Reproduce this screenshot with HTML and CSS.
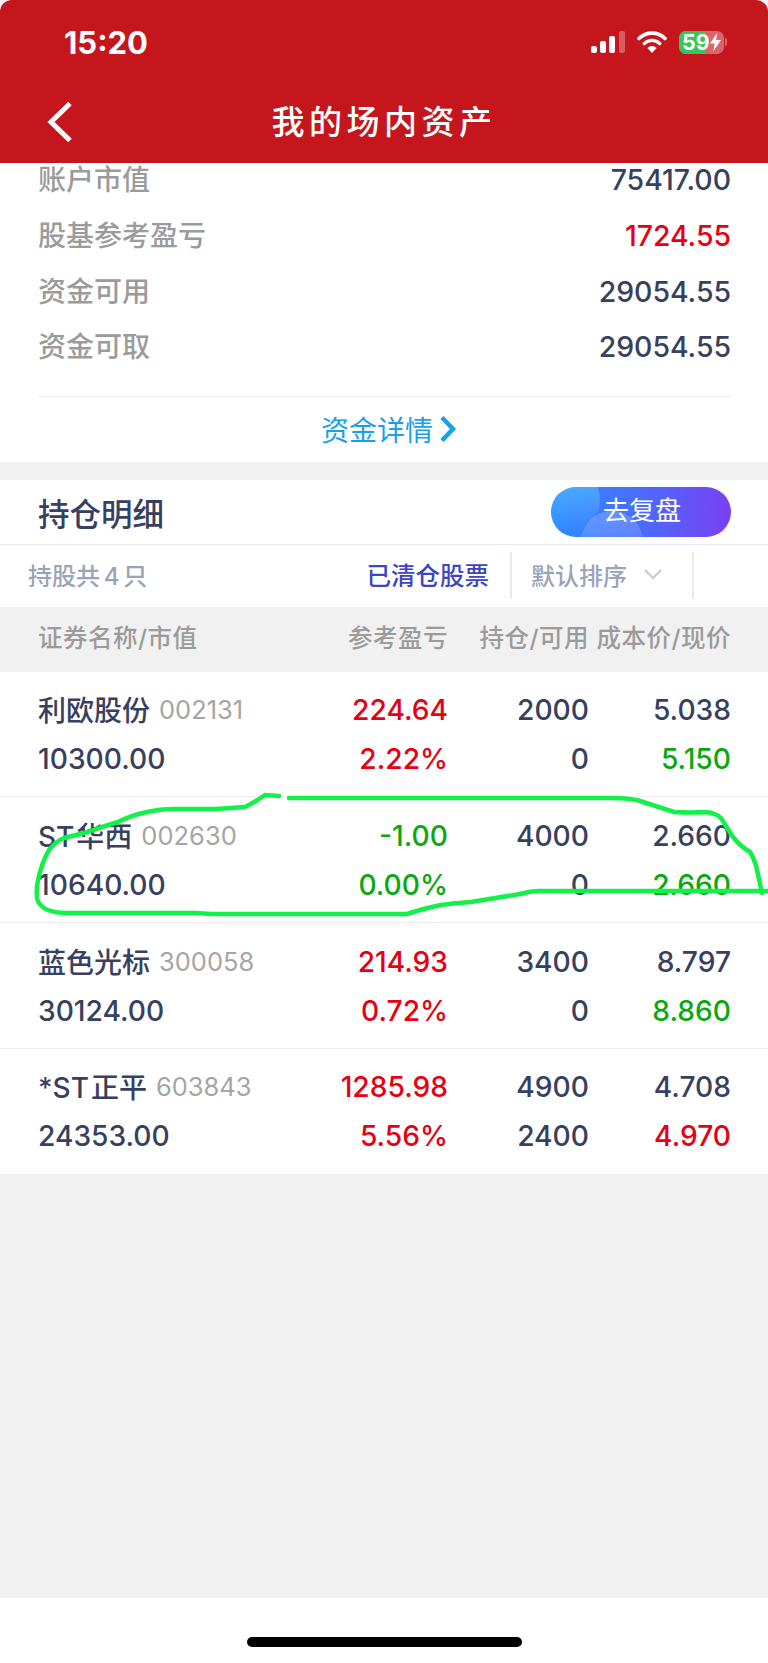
FILE: index.html
```html
<!DOCTYPE html>
<html lang="zh-CN">
<head>
  <meta charset="UTF-8" />
  <meta name="viewport" content="width=device-width, initial-scale=1.0"/>
  <title>我的场内资产</title>
  <link rel="stylesheet" href="styles.css">
</head>
<body>
<div class="page">

  <header class="top">
    <div class="status">
      <span class="time">15:20</span>
      <div class="status-icons">
        <svg class="signal" width="34" height="22" viewBox="0 0 34 22">
          <rect x="0" y="15" width="6" height="7" rx="2" fill="#fff"/>
          <rect x="9" y="10" width="6" height="12" rx="2" fill="#fff"/>
          <rect x="18" y="5" width="6" height="17" rx="2" fill="#fff"/>
          <rect x="28" y="0" width="6" height="22" rx="2" fill="#fff" fill-opacity=".3"/>
        </svg>
        <svg class="wifi" width="30" height="22" viewBox="0 0 30 22">
          <path d="M2 7.5a18.5 18.5 0 0 1 26 0" fill="none" stroke="#fff" stroke-width="3.6" stroke-linecap="round"/>
          <path d="M7.2 12.6a11 11 0 0 1 15.6 0" fill="none" stroke="#fff" stroke-width="3.4" stroke-linecap="round"/>
          <path d="M15 22l-4.6-5a6.4 6.4 0 0 1 9.2 0z" fill="#fff"/>
        </svg>
        <div class="battery">
          <div class="battery-fill"></div>
          <span class="battery-num">59</span>
          <svg class="bolt" width="11" height="18" viewBox="0 0 11 18"><path d="M7 0L0 10.500h4.500L3.500 18 11 7H6.200z" fill="#fff"/></svg>
        </div>
        <div class="battery-nub"></div>
      </div>
    </div>
    <div class="nav">
      <svg class="back" width="26" height="42" viewBox="0 0 26 42"><path d="M23 2.500L4 21l19 18.500" fill="none" stroke="#fff" stroke-width="5"/></svg>
      <h1>我的场内资产</h1>
    </div>
  </header>

  <section class="summary">
    <div class="sum-row"><span>账户市值</span><b>75417.00</b></div>
    <div class="sum-row"><span>股基参考盈亏</span><b class="red">1724.55</b></div>
    <div class="sum-row"><span>资金可用</span><b>29054.55</b></div>
    <div class="sum-row"><span>资金可取</span><b>29054.55</b></div>
    <div class="detail-link">
      资金详情
      <svg width="18" height="28" viewBox="0 0 18 28"><path d="M3 2.500L14 14 3 25.500" fill="none" stroke="#1a9fe8" stroke-width="4.500"/></svg>
    </div>
  </section>

  <section class="holdings">
    <div class="hold-title">
      <h2>持仓明细</h2>
      <div class="review-btn"><span>去复盘</span></div>
    </div>
    <div class="hold-bar">
      <span class="count">持股共 4 只</span>
      <span class="cleared">已清仓股票</span>
      <div class="sort">
        默认排序
        <svg width="18" height="11" viewBox="0 0 18 11"><path d="M1 1l8 8 8-8" fill="none" stroke="#c4c8d2" stroke-width="2"/></svg>
      </div>
    </div>
    <div class="stock-head">
      <span>证券名称/市值</span>
      <span>参考盈亏</span>
      <span>持仓/可用</span>
      <span>成本价/现价</span>
    </div>

    <div class="stock">
      <div class="name">利欧股份<small>002131</small></div>
      <div class="red">224.64</div>
      <div>2000</div>
      <div>5.038</div>
      <div>10300.00</div>
      <div class="red">2.22%</div>
      <div>0</div>
      <div class="green">5.150</div>
    </div>
    <div class="stock">
      <div class="name">ST 华西<small>002630</small></div>
      <div class="green">-1.00</div>
      <div>4000</div>
      <div>2.660</div>
      <div>10640.00</div>
      <div class="green">0.00%</div>
      <div>0</div>
      <div class="green">2.660</div>
    </div>
    <div class="stock">
      <div class="name">蓝色光标<small>300058</small></div>
      <div class="red">214.93</div>
      <div>3400</div>
      <div>8.797</div>
      <div>30124.00</div>
      <div class="red">0.72%</div>
      <div>0</div>
      <div class="green">8.860</div>
    </div>
    <div class="stock">
      <div class="name">*ST 正平<small>603843</small></div>
      <div class="red">1285.98</div>
      <div>4900</div>
      <div>4.708</div>
      <div>24353.00</div>
      <div class="red">5.56%</div>
      <div>2400</div>
      <div class="red">4.970</div>
    </div>
  </section>

  <div class="filler"></div>
  <footer class="home"><div class="home-bar"></div></footer>

  <!-- hand drawn circle on top of the screenshot -->
  <svg class="scribble" width="768" height="1663" viewBox="0 0 768 1663">
    <path d="M289 798L613 798Q625 798 637 800L674 812Q690 813 706 812Q716 813 721 818Q727 828 733 837Q740 846 750 852Q755 860 757 870L762 893"/>
    <path d="M768 891L539 891Q530 891 520 894L471 902Q455 903 441 905Q425 908 407 914L211 914L196 913L64 913Q50 912 44 908Q38 904 37 898Q36 890 38 880Q42 862 49 850Q56 841 64 838Q76 835 88 832Q104 826 118 822Q132 815 147 812Q160 809 172 809L216 809L245 807Q255 802 265 795L279 796"/>
  </svg>
</div>
</body>
</html>
```

FILE: styles.css
```css
* { box-sizing: border-box; }

body {
  margin: 0;
  background: #fff;
  color: #384060;
  font-family: Inter, "Noto Sans CJK SC", sans-serif;
}

h1, h2 { margin: 0; font-weight: 500; }

.red { color: #e60012; }
.green { color: #0aa80f; }

.page {
  position: relative;
  display: flex;
  flex-direction: column;
  width: 768px;
  height: 1663px;
  overflow: hidden;
  background: #f1f1f1;
}

/* red top area */
.top {
  position: relative;
  z-index: 2;
  height: 163px;
  background: #c4161c;
  border-radius: 12px 12px 0 0;
  color: #fff;
}

.status {
  display: flex;
  justify-content: space-between;
  align-items: center;
  height: 84px;
  padding: 0 41px 0 64px;
}

.time {
  font-size: 31px;
  font-weight: 700;
}

.status-icons {
  display: flex;
  align-items: center;
}

.signal { margin-right: 12px; }
.wifi { margin-right: 12px; }

.battery {
  position: relative;
  display: flex;
  align-items: center;
  width: 45px;
  height: 23px;
  padding-left: 3px;
  border-radius: 7px;
  background: rgba(255, 255, 255, .35);
}

.battery-fill {
  position: absolute;
  left: 0;
  top: 0;
  width: 26px;
  height: 100%;
  border-radius: 7px 0 0 7px;
  background: #34c759;
}

.battery-num {
  position: relative;
  font-size: 21.500px;
  font-weight: 700;
  line-height: 23px;
}

.bolt { position: relative; }

.battery-nub {
  width: 2px;
  height: 8px;
  margin-left: 1px;
  border-radius: 0 2px 2px 0;
  background: rgba(255, 255, 255, .35);
}

.nav {
  position: relative;
  display: flex;
  justify-content: center;
  align-items: center;
  height: 76px;
  padding-bottom: 4px;
}

.nav h1 {
  font-size: 33px;
  letter-spacing: 4.500px;
}

.back {
  position: absolute;
  left: 47px;
  top: 17px;
}

/* account numbers */
.summary {
  margin-top: -11px;
  padding: 0 37px 0 38px;
  background: #fff;
}

.sum-row {
  display: flex;
  justify-content: space-between;
  align-items: center;
  height: 55.700px;
  font-size: 28.400px;
}

.sum-row span {
  margin-bottom: 3px;
  color: #9b9b9b;
  font-size: 28px;
  font-weight: 500;
}

.sum-row b { font-weight: 500; }

.detail-link {
  display: flex;
  justify-content: center;
  align-items: center;
  gap: 6px;
  height: 66px;
  margin-top: 21px;
  padding-left: 9px;
  border-top: 1px solid #eee;
  color: #1a9fe8;
  font-size: 28px;
}

/* holdings */
.holdings {
  margin-top: 18px;
  background: #fff;
}

.hold-title {
  display: flex;
  justify-content: space-between;
  align-items: center;
  height: 65px;
  padding: 0 37px 0 38px;
  border-bottom: 1px solid #e6ebf3;
}

.hold-title h2 { font-size: 31.500px; }

.review-btn {
  position: relative;
  width: 180px;
  height: 50px;
  padding-left: 52px;
  overflow: hidden;
  border-radius: 25px;
  background: linear-gradient(90deg, #2f8cff, #4a6cff 50%, #7b3ff2);
  color: #fff;
  font-size: 26px;
  line-height: 48px;
  text-align: left;
}

.review-btn span { position: relative; }

.review-btn::before {
  content: "";
  position: absolute;
  left: -15px;
  top: -20px;
  width: 64px;
  height: 64px;
  border-radius: 50%;
  background: linear-gradient(#55b8ff, rgba(60, 150, 255, 0));
}

.review-btn::after {
  content: "";
  position: absolute;
  left: 30px;
  top: 24px;
  width: 62px;
  height: 62px;
  border-radius: 50%;
  background: linear-gradient(rgba(255, 255, 255, .2), rgba(255, 255, 255, .04));
}

.hold-bar {
  display: flex;
  align-items: center;
  height: 62px;
  padding: 0 0 0 28px;
  font-size: 24px;
}

.count {
  flex: 1;
  padding-bottom: 2px;
  color: #9aa3b8;
  font-weight: 500;
  word-spacing: -2.600px;
}

.cleared {
  margin-right: 21px;
  padding-bottom: 2px;
  color: #3d45c0;
  font-size: 24.500px;
  font-weight: 500;
}

.sort {
  display: flex;
  align-items: center;
  gap: 17px;
  width: 184px;
  height: 47px;
  margin-right: 74px;
  padding: 0 0 2px 19px;
  border-left: 2px solid #e6ebf3;
  border-right: 2px solid #e6ebf3;
  color: #9aa3b8;
  font-weight: 500;
}

.stock-head, .stock {
  display: grid;
  grid-template-columns: 1fr 140px 141px 142px;
  padding: 0 37px 0 38px;
  text-align: right;
}

.stock-head {
  align-items: center;
  height: 65px;
  padding-bottom: 5px;
  background: #f1f1f1;
  color: #9b9b9b;
  font-size: 24.500px;
  font-weight: 500;
  letter-spacing: .5px;
}

.stock-head span:first-child, .stock div:nth-child(4n+1) { text-align: left; }

.stock {
  align-items: center;
  grid-auto-rows: 49px;
  height: 125.700px;
  padding-top: 14px;
  border-bottom: 1px solid #efefef;
  font-size: 28.200px;
  font-weight: 500;
}

.stock .name {
  font-size: 28px;
  white-space: nowrap;
  word-spacing: -5.500px;
  margin-bottom: 2px;
}

.name small {
  margin-left: 9px;
  color: #a5a5a5;
  font-size: 25.500px;
  font-weight: 400;
  word-spacing: 0;
  vertical-align: 2px;
}

.filler { flex: 1; }

.home {
  display: flex;
  justify-content: center;
  height: 65px;
  background: #fff;
}

.home-bar {
  width: 275px;
  height: 10px;
  margin-top: 39px;
  border-radius: 5px;
  background: #000;
}

.scribble {
  position: absolute;
  left: 0;
  top: 0;
  z-index: 3;
  pointer-events: none;
}

.scribble path {
  fill: none;
  stroke: #14f04a;
  stroke-width: 4.500;
  stroke-linecap: round;
}
```
